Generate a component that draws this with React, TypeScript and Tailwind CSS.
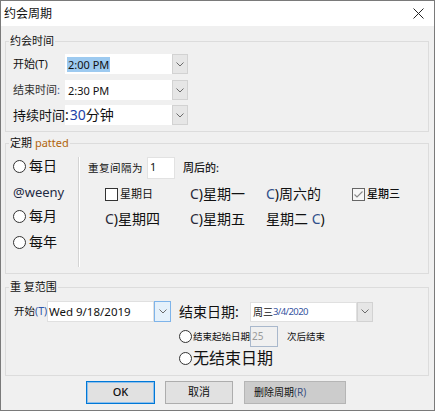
import React from "react";

const Chevron = () => (
  <svg width="8" height="5" viewBox="0 0 8 5">
    <path d="M0.5 0.5 L4 4 L7.5 0.5" stroke="#6b6b6b" strokeWidth="1" fill="none" />
  </svg>
);

const Radio = () => (
  <div className="w-[13px] h-[13px] rounded-full border border-[#333] bg-white shrink-0" />
);

const C = ({ blue = false }: { blue?: boolean }) => (
  <span>
    <span className={blue ? "text-[#2f4f8a]" : "text-[#2a2a3a]"}>C</span>)
  </span>
);

export default function App() {
  return (
    <div className="w-[435px] h-[411px] border border-[#7a7a7a] bg-[#f0f0f0] flex flex-col font-['Noto_Sans','Noto_Sans_CJK_SC',sans-serif] text-[#111]">
      {/* title bar */}
      <div className="h-[25px] bg-white flex items-center justify-between pl-[3px] pr-[10px] shrink-0">
        <span className="text-[12px] leading-[14px]">约会周期</span>
        <svg width="11" height="11" viewBox="0 0 11 11">
          <path d="M0.5 0.5 L10.5 10.5 M10.5 0.5 L0.5 10.5" stroke="#222" strokeWidth="1" />
        </svg>
      </div>

      <div className="flex-1 pl-[4px] pr-[5px] flex flex-col">
        {/* group 1 */}
        <fieldset className="mt-[8px] border border-[#dcdcdc] pb-[6px]">
          <legend className="ml-[3px] px-[1px] text-[11px] leading-[14px]">约会时间</legend>
          <div className="mt-[6px] flex items-center h-[20px]">
            <div className="w-[59px] pl-[7px] text-[11px] leading-[14px]">开始(T)</div>
            <div className="w-[107px] h-[20px] bg-white flex items-center pl-[2px]">
              <span className="bg-[#9dcaf0] text-[11px] leading-[15px] px-[1px]">2:00 PM</span>
            </div>
            <div className="w-[16px] h-[20px] bg-[#e6e6e6] border border-[#d2d2d2] flex items-center justify-center">
              <Chevron />
            </div>
          </div>
          <div className="mt-[6px] flex items-center h-[20px]">
            <div className="w-[59px] pl-[7px] text-[11px] leading-[14px] text-[#333]">
              结束时间<span className="text-[#3a5a9a]">:</span>
            </div>
            <div className="w-[107px] h-[20px] bg-white flex items-center pl-[3px]">
              <span className="text-[11px] leading-[15px]">2:30 PM</span>
            </div>
            <div className="w-[16px] h-[20px] bg-[#e6e6e6] border border-[#d2d2d2] flex items-center justify-center">
              <Chevron />
            </div>
          </div>
          <div className="mt-[5px] flex items-center h-[20px]">
            <div className="w-[59px] pl-[7px] text-[13px] leading-[16px] whitespace-nowrap">持续时间</div>
            <div className="w-[107px] h-[20px] bg-white flex items-center text-[14px] leading-[16px] whitespace-nowrap">
              <span>:</span>
              <span className="text-[#1d3fa8] ml-[1px]">30</span>
              <span>分钟</span>
            </div>
            <div className="w-[16px] h-[20px] bg-[#e6e6e6] border border-[#d2d2d2] flex items-center justify-center">
              <Chevron />
            </div>
          </div>
        </fieldset>

        {/* group 2 */}
        <fieldset className="mt-[4px] border border-[#dcdcdc]">
          <legend className="ml-[3px] px-[1px] text-[11px] leading-[14px]">
            定期 <span className="text-[#b0650c]">patted</span>
          </legend>
          <div className="h-[123px] flex">
            <div className="w-[72px] pt-[6px] flex flex-col">
              <div className="h-[20px] flex items-center pl-[7px] gap-[3px]">
                <Radio />
                <span className="text-[14px] leading-[16px]">每日</span>
              </div>
              <div className="mt-[7px] h-[20px] flex items-center pl-[7px] text-[13px] text-[#1e2a44]">@weeny</div>
              <div className="mt-[3px] h-[20px] flex items-center pl-[7px] gap-[3px]">
                <Radio />
                <span className="text-[14px] leading-[16px]">每月</span>
              </div>
              <div className="mt-[6px] h-[20px] flex items-center pl-[7px] gap-[3px]">
                <Radio />
                <span className="text-[14px] leading-[16px]">每年</span>
              </div>
            </div>
            <div className="mt-[7px] w-[2px] h-[110px] border-l border-[#d4d4d4] border-r border-r-white" />
            <div className="flex-1 pl-[8px] pt-[7px] flex flex-col">
              <div className="flex items-center h-[22px]">
                <div className="w-[59px] text-[10.5px] leading-[13px] tracking-[0.5px] whitespace-nowrap">重复间隔为</div>
                <div className="w-[28px] h-[22px] bg-white border border-[#e2e2e2] text-[11px] leading-[14px] pl-[2px] pt-[2px]">1</div>
                <div className="ml-[8px] text-[11px] leading-[14px] font-medium text-[#222]">周后的:</div>
              </div>
              <div className="mt-[5px] ml-[17px] grid grid-cols-[85px_76px_86px_auto] grid-rows-[20px_20px] gap-y-[5px] items-center text-[14px] leading-[16px] whitespace-nowrap">
                <div className="flex items-center gap-[2px]">
                  <div className="w-[13px] h-[13px] border border-[#333] bg-white" />
                  <span className="text-[11px] leading-[14px]">星期日</span>
                </div>
                <div><C />星期一</div>
                <div><C blue />周六的</div>
                <div className="flex items-center gap-[2px]">
                  <div className="w-[13px] h-[13px] border border-[#666] bg-[#f6f6f6] flex items-center justify-center">
                    <svg width="9" height="7" viewBox="0 0 9 7">
                      <path d="M0.5 3.5 L3 6 L8.5 0.5" stroke="#888" strokeWidth="1.1" fill="none" />
                    </svg>
                  </div>
                  <span className="text-[11px] leading-[14px] font-medium">星期三</span>
                </div>
                <div><C />星期四</div>
                <div><C />星期五</div>
                <div>星期二 <C blue /></div>
                <div />
              </div>
            </div>
          </div>
        </fieldset>

        {/* group 3 */}
        <fieldset className="mt-[6px] border border-[#dcdcdc] pb-[6px]">
          <legend className="ml-[3px] px-[1px] text-[11px] leading-[14px]">重 复范围</legend>
          <div className="pt-[7px] flex">
            <div className="flex items-center h-[21px] pl-[8px]">
              <div className="w-[33px] text-[10.5px] leading-[13px] whitespace-nowrap">
                开始<span className="text-[#2d57a8]">(T)</span>
              </div>
              <div className="w-[107px] h-[21px] bg-white border border-[#e0e0e0] flex items-center pl-[1px] text-[11.5px] leading-[14px] whitespace-nowrap">
                Wed 9/18/2019
              </div>
              <div className="w-[17px] h-[21px] bg-[#e5f1fb] border border-[#7eb4ea] flex items-center justify-center">
                <Chevron />
              </div>
            </div>
            <div className="ml-[8px] flex flex-col">
              <div className="flex items-center h-[21px]">
                <div className="w-[71px] text-[14px] leading-[16px] whitespace-nowrap">结束日期:</div>
                <div className="w-[107px] h-[20px] bg-white border border-[#e0e0e0] flex items-center pl-[2px] text-[10px] leading-[12px] whitespace-nowrap">
                  周三<span className="text-[#3553a0] tracking-[-0.6px] text-[9.5px]">3/4/2020</span>
                </div>
                <div className="w-[16px] h-[20px] bg-[#e6e6e6] border border-[#d2d2d2] flex items-center justify-center">
                  <Chevron />
                </div>
              </div>
              <div className="mt-[4px] flex items-center h-[21px]">
                <Radio />
                <div className="ml-[1px] w-[57px] text-[9.5px] leading-[12px] whitespace-nowrap">结束起始日期</div>
                <div className="w-[28px] h-[21px] border border-[#a9b8cc] flex items-center text-[10px] text-[#9a9a9a] pl-[1px]">25</div>
                <div className="ml-[9px] text-[9.5px] leading-[12px] whitespace-nowrap">次后结束</div>
              </div>
              <div className="flex items-center h-[22px]">
                <Radio />
                <span className="ml-[1px] text-[16px] leading-[18px] whitespace-nowrap">无结束日期</span>
              </div>
            </div>
          </div>
        </fieldset>

        {/* buttons */}
        <div className="mt-[5px] flex pl-[81px] gap-[10px]">
          <div className="w-[69px] h-[23px] bg-[#e1e1e1] border border-[#0078d7] shadow-[inset_0_0_0_1px_#8fc0ec] flex items-center justify-center text-[11px] font-medium">OK</div>
          <div className="w-[68px] h-[23px] bg-[#e1e1e1] border border-[#adadad] flex items-center justify-center text-[11px]">取消</div>
          <div className="ml-[1px] w-[102px] h-[23px] bg-[#cccccc] border border-[#b5b5b5] flex items-center pl-[9px] text-[10px] whitespace-nowrap">
            删除周期<span className="text-[#3a4f80]">(R)</span>
          </div>
        </div>
      </div>
    </div>
  );
}
